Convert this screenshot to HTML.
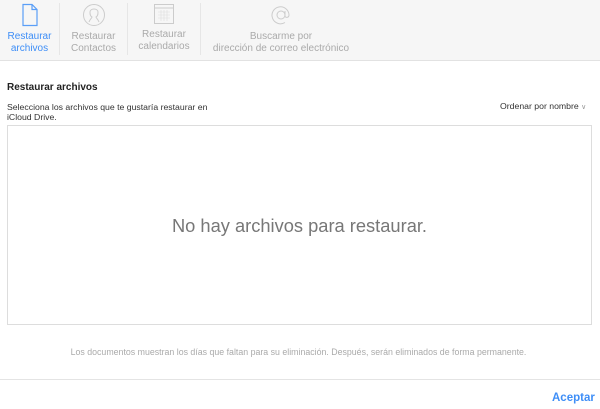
<!DOCTYPE html><html><head><style>
body{margin:0;width:600px;height:409px;background:#fff;font-family:"Liberation Sans",sans-serif;position:relative;overflow:hidden}
.hdr{position:absolute;left:0;top:0;width:600px;height:60px;background:#f6f6f6;border-bottom:1px solid #e2e2e2}
.tab{position:absolute;top:0;height:56px;text-align:center;font-size:10px;line-height:12px;color:#aaa}
.tab svg{display:block;margin:3px auto 4px}
.div{position:absolute;top:3px;width:1px;height:52px;background:#e6e6e6}
.t{position:absolute;font-size:9px;color:#333}
</style></head><body>
<div class="hdr">
<div class="tab" style="left:0;width:59px;color:#3e8ef7">
<svg width="22" height="24" viewBox="0 0 22 24"><path d="M4 1.5h9l5 5v16H4z M13 1.5v5h5" fill="none" stroke="#5a9ef7" stroke-width="1.2"/></svg>Restaurar<br>archivos</div>
<div class="div" style="left:59px"></div>
<div class="tab" style="left:60px;width:67px">
<svg width="24" height="24" viewBox="0 0 24 24"><circle cx="12" cy="12" r="10.5" fill="none" stroke="#ccc"/><path d="M7 19c1-3 3-4 3-5-2-1-2-3-2-5 0-2 2-3 4-3s4 1 4 3c0 2 0 4-2 5 0 1 2 2 3 5" fill="none" stroke="#ccc"/></svg>Restaurar<br>Contactos</div>
<div class="div" style="left:127px"></div>
<div class="tab" style="left:128px;width:72px">
<svg width="22" height="22" viewBox="0 0 22 22"><rect x="1.5" y="1.5" width="19" height="19" fill="none" stroke="#ccc"/><line x1="1.5" y1="5" x2="20.5" y2="5" stroke="#ccc"/><path d="M5 9h12M5 12h12M5 15h12M8 7v11M11 7v11M14 7v11" stroke="#ddd" stroke-width=".6"/></svg>Restaurar<br>calendarios</div>
<div class="div" style="left:200px"></div>
<div class="tab" style="left:201px;width:160px">
<svg width="24" height="24" viewBox="0 0 24 24"><circle cx="12" cy="12" r="4" fill="none" stroke="#ccc"/><path d="M16 8v5c0 2 4 2 4-1A8.5 8.5 0 1 0 16 19.5" fill="none" stroke="#ccc"/></svg>Buscarme por<br>dirección de correo electrónico</div>
</div>
<div class="t" style="left:7px;top:82px;font-size:10px;font-weight:bold;color:#222">Restaurar archivos</div>
<div class="t" style="left:7px;top:102px;line-height:10px;font-size:8.7px">Selecciona los archivos que te gustaría restaurar en<br>iCloud Drive.</div>
<div class="t" style="left:500px;top:101px;font-size:8.7px">Ordenar por nombre <span style="color:#999;font-size:7px">∨</span></div>
<div style="position:absolute;left:7px;top:125px;width:583px;height:198px;border:1px solid #ddd"></div>
<div style="position:absolute;left:7px;top:215px;width:585px;text-align:center;font-size:18.3px;color:#777">No hay archivos para restaurar.</div>
<div style="position:absolute;left:0;top:347px;width:597px;text-align:center;font-size:8.8px;color:#aaa">Los documentos muestran los días que faltan para su eliminación. Después, serán eliminados de forma permanente.</div>
<div style="position:absolute;left:0;top:379px;width:600px;height:1px;background:#e4e4e4"></div>
<div style="position:absolute;left:552px;top:392px;font-size:11.5px;font-weight:bold;color:#3e8ef7">Aceptar</div>
</body></html>
